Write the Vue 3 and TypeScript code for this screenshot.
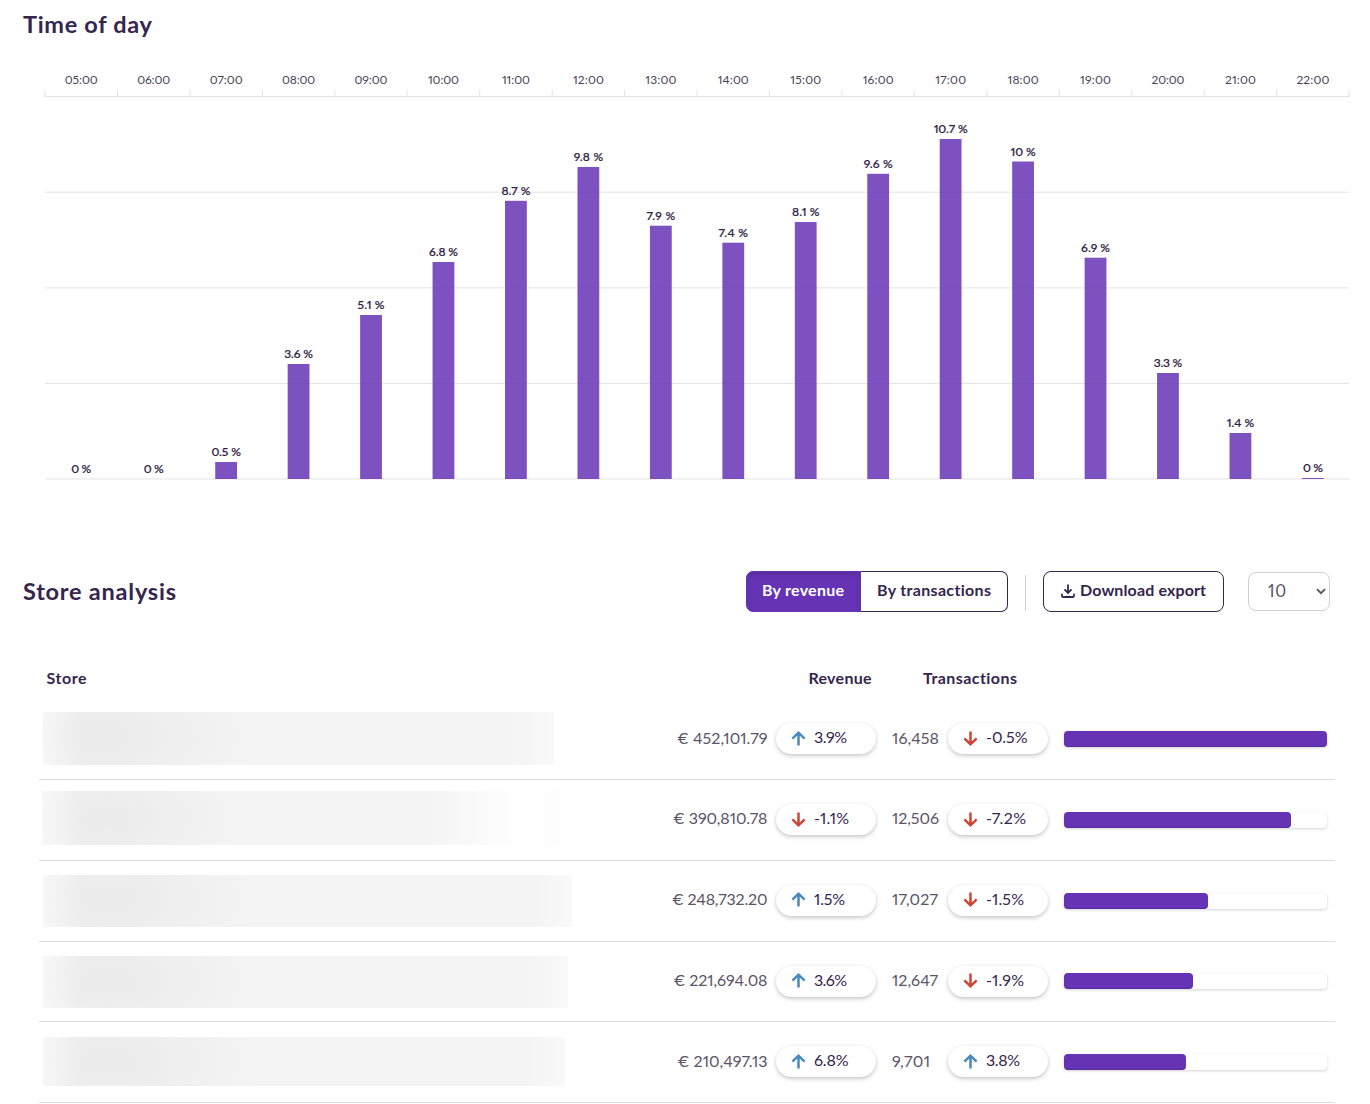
<script setup lang="ts">
interface Bar {
  hour: string
  label: string
  top: number
  w: number
}

const bars: Bar[] = [
  { hour: '05:00', label: '0 %', top: 479, w: 20 },
  { hour: '06:00', label: '0 %', top: 479, w: 20 },
  { hour: '07:00', label: '0.5 %', top: 462, w: 29.5 },
  { hour: '08:00', label: '3.6 %', top: 364, w: 28.5 },
  { hour: '09:00', label: '5.1 %', top: 315, w: 27 },
  { hour: '10:00', label: '6.8 %', top: 262, w: 29 },
  { hour: '11:00', label: '8.7 %', top: 200.8, w: 29 },
  { hour: '12:00', label: '9.8 %', top: 167, w: 29.5 },
  { hour: '13:00', label: '7.9 %', top: 225.7, w: 28.5 },
  { hour: '14:00', label: '7.4 %', top: 242.7, w: 29.5 },
  { hour: '15:00', label: '8.1 %', top: 222, w: 27.5 },
  { hour: '16:00', label: '9.6 %', top: 173.8, w: 29 },
  { hour: '17:00', label: '10.7 %', top: 139, w: 34 },
  { hour: '18:00', label: '10 %', top: 161.5, w: 25 },
  { hour: '19:00', label: '6.9 %', top: 257.7, w: 29 },
  { hour: '20:00', label: '3.3 %', top: 373, w: 28.5 },
  { hour: '21:00', label: '1.4 %', top: 433, w: 27.5 },
  { hour: '22:00', label: '0 %', top: 478, w: 20 },
]
const left = 45
const step = 72.45
const hourWidth = (h: string): number => (h === '11:00' ? 28 : h[0] === '1' || h[1] === '1' ? 31 : 33)
const center = (i: number): number => left + step * (i + 0.5)

interface Row {
  revenue: string
  revenueW: number
  revenueDelta: string
  revenueDeltaW: number
  count: string
  countW: number
  countDelta: string
  countDeltaW: number
  share: number
  blur: { x: number; y: number; w: number; h: number }
}
const rows: Row[] = [
  { revenue: '€ 452,101.79', revenueW: 90.5, revenueDelta: '3.9%', revenueDeltaW: 33, count: '16,458', countW: 47, countDelta: '-0.5%', countDeltaW: 41.5, share: 263, blur: { x: 4, y: 13, w: 511, h: 53 } },
  { revenue: '€ 390,810.78', revenueW: 94.5, revenueDelta: '-1.1%', revenueDeltaW: 35, count: '12,506', countW: 47, countDelta: '-7.2%', countDeltaW: 40, share: 227, blur: { x: 3, y: 11, w: 518, h: 54 } },
  { revenue: '€ 248,732.20', revenueW: 95.5, revenueDelta: '1.5%', revenueDeltaW: 31, count: '17,027', countW: 46, countDelta: '-1.5%', countDeltaW: 38, share: 144, blur: { x: 4, y: 14, w: 529, h: 52 } },
  { revenue: '€ 221,694.08', revenueW: 94, revenueDelta: '3.6%', revenueDeltaW: 33, count: '12,647', countW: 46, countDelta: '-1.9%', countDeltaW: 38, share: 129, blur: { x: 4, y: 14, w: 525, h: 52 } },
  { revenue: '€ 210,497.13', revenueW: 90, revenueDelta: '6.8%', revenueDeltaW: 34.5, count: '9,701', countW: 38, countDelta: '3.8%', countDeltaW: 34, share: 122, blur: { x: 4, y: 14.5, w: 522, h: 49 } },
]
const up = 'M7.5 14.4V1.8M1.4 7.7L7.5 1.7l6.1 6'
const down = 'M7.5.6v12.6M1.4 7.3l6.1 6 6.1-6'
const isDown = (v: string): boolean => v.startsWith('-')
</script>

<template>
  <main class="page">
    <h2 class="title"><svg width="140" height="36"><text x="0" y="25.4" textLength="129">Time of day</text></svg></h2>

    <svg class="chart" width="1370" height="440" viewBox="0 60 1370 440">
      <g class="grid">
        <path d="M45 96.5H1349" />
        <path d="M45 192.2H1349M45 287.9H1349M45 383.4H1349M45 479H1349" />
        <path v-for="n in 19" :key="n" :d="`M${left + step * (n - 1)} 90V97`" />
      </g>
      <g v-for="(b, i) in bars" :key="b.hour">
        <text class="hour" :x="center(i)" y="84" :textLength="hourWidth(b.hour)">{{ b.hour }}</text>
        <rect v-if="b.top < 479" class="bar" :x="center(i) - 10.9" :y="b.top" width="21.8" :height="479 - b.top" />
        <text class="value" :x="center(i)" :y="b.top - 6" :textLength="b.w">{{ b.label }}</text>
      </g>
    </svg>

    <header class="toolbar">
      <h2 class="title"><svg width="160" height="36"><text x="0" y="25.4" textLength="153">Store analysis</text></svg></h2>
      <div class="actions">
        <div class="toggle">
          <button class="on"><svg width="82" height="24"><text x="0" y="17" textLength="82">By revenue</text></svg></button>
          <button class="off"><svg width="114" height="24"><text x="0" y="17" textLength="114">By transactions</text></svg></button>
        </div>
        <span class="rule"></span>
        <button class="export">
          <svg class="dl" width="14" height="14" viewBox="0 0 14 14"><path d="M7 .4v8.2M3.4 5.3L7 8.9l3.6-3.6M1 9.8v2.3q0 .9.9.9h10.2q.9 0 .9-.9V9.8" /></svg>
          <svg width="126" height="24"><text x="0" y="17" textLength="126">Download export</text></svg>
        </button>
        <div class="select">
          <svg width="18" height="24"><text x="-1" y="18" textLength="18">10</text></svg>
          <svg class="chev" width="10" height="7" viewBox="0 0 10 7"><path d="M1 1.2l4 4 4-4" /></svg>
        </div>
      </div>
    </header>

    <section class="table">
      <div class="head">
        <svg class="h-store" width="42" height="24"><text x="-.5" y="17" textLength="40">Store</text></svg>
        <svg class="h-revenue" width="64" height="24"><text x="-.5" y="17" textLength="63">Revenue</text></svg>
        <svg class="h-trans" width="96" height="24"><text x="-1" y="17" textLength="94">Transactions</text></svg>
      </div>
      <div v-for="(r, i) in rows" :key="r.revenue" class="row">
        <div class="store">
          <div class="blur" :class="'b' + i" :style="{ marginLeft: r.blur.x + 'px', marginTop: r.blur.y + 'px', width: r.blur.w + 'px', height: r.blur.h + 'px' }"></div>
        </div>
        <svg class="num revenue" width="100" height="24"><text :x="99.5 - r.revenueW" y="17" :textLength="r.revenueW">{{ r.revenue }}</text></svg>
        <div class="pill">
          <svg width="15" height="15" :class="isDown(r.revenueDelta) ? 'neg' : 'pos'"><path :d="isDown(r.revenueDelta) ? down : up" /></svg>
          <svg class="delta" width="46" height="24"><text x="0" y="17" :textLength="r.revenueDeltaW">{{ r.revenueDelta }}</text></svg>
        </div>
        <svg class="num count" width="50" height="24"><text x="0" y="17" :textLength="r.countW">{{ r.count }}</text></svg>
        <div class="pill second">
          <svg width="15" height="15" :class="isDown(r.countDelta) ? 'neg' : 'pos'"><path :d="isDown(r.countDelta) ? down : up" /></svg>
          <svg class="delta" width="46" height="24"><text x="0" y="17" :textLength="r.countDeltaW">{{ r.countDelta }}</text></svg>
        </div>
        <div class="track"><div class="fill" :style="{ width: r.share + 'px' }"></div></div>
      </div>
    </section>
  </main>
</template>

<style>
body { background: #fff; overflow: hidden; }
</style>

<style scoped>
.page {
  width: 1370px;
  height: 1104px;
  overflow: hidden;
  display: flex;
  flex-direction: column;
  background: #fff;
  font-family: Lato, "Open Sans", sans-serif;
  font-variant-numeric: proportional-nums;
  font-variant-ligatures: none;
  color: #35254f;
}
svg { display: block; flex: none; overflow: visible; }
text { fill: currentColor; }
.title { margin: 8px 0 0 23px; height: 36px; font-size: 23.5px; font-weight: 700; line-height: 36px; }
.chart { margin-top: 16px; }
.grid path { stroke: #e3e3e5; stroke-width: 1; fill: none; }
.bar { fill: #6633b5; fill-opacity: .85; }
.hour { font-size: 12px; fill: #4a4358; text-anchor: middle; }
.value { font-size: 12px; font-weight: 500; fill: #2f2145; stroke: #2f2145; stroke-width: .2px; text-anchor: middle; }
.toolbar { display: flex; justify-content: space-between; margin-top: 71px; height: 41px; }
.toolbar .title { margin-top: 4px; }
.actions { display: flex; align-items: center; margin-right: 40px; font-size: 16px; font-weight: 700; }
button { font: inherit; color: inherit; background: #fff; border: 1px solid #35254f; box-sizing: border-box; height: 41px; padding: 0 0 2px 16px; display: flex; align-items: center; }
.toggle { display: flex; }
.on { width: 115px; background: #6633b5; border-color: #6633b5; color: #fff; border-radius: 7px 0 0 7px; box-shadow: inset 0 3px 5px rgba(0, 0, 0, .125); padding-left: 15px; }
.off { width: 147px; border-left: 0; border-radius: 0 7px 7px 0; }
.rule { width: 1px; height: 36px; background: #cfcfd4; margin: 3px 17px 0; }
.export { width: 181px; border-radius: 8px; padding-left: 17px; }
.dl { margin-right: 5px; margin-top: 1px; }
.dl path { fill: none; stroke: #35254f; stroke-width: 1.8; }
.select { box-sizing: border-box; width: 82px; height: 39px; margin-left: 24px; border: 1px solid #cfcfd4; border-radius: 8px; display: flex; align-items: center; justify-content: space-between; padding: 0 3px 2px 20px; color: #555064; font-weight: 400; font-size: 16.5px; }
.chev { margin-top: 1px; }
.chev path { fill: none; stroke: #555060; stroke-width: 1.8; }
.table { width: 1296px; margin-left: 39px; display: flex; flex-direction: column; }
.head { height: 87.4px; box-sizing: border-box; padding-top: 55px; display: flex; font-size: 16px; font-weight: 700; }
.h-store { margin-left: 8px; }
.h-revenue { margin-left: 719.5px; }
.h-trans { margin-left: 51px; }
.row { box-sizing: border-box; height: 80.75px; flex: none; border-bottom: 1px solid #dcdcde; display: flex; align-items: center; }
.store { width: 629px; align-self: stretch; }
.blur { background: radial-gradient(ellipse 150px 75px at 65px 24px, #ebebeb 0, rgba(236, 236, 236, .8) 35%, rgba(244, 244, 244, 0) 100%), linear-gradient(90deg, #f7f7f7, #f4f4f4 40px, #f4f4f4 calc(100% - 40px), #f9f9f9); mask: linear-gradient(90deg, rgba(0, 0, 0, .55), #000 35px); }
.b0 { background: radial-gradient(ellipse 160px 80px at 55px 24px, #ebebeb 0, rgba(236, 236, 236, .8) 35%, rgba(244, 244, 244, 0) 100%), linear-gradient(90deg, #f7f7f7, #f4f4f4 40px, #f4f4f4 calc(100% - 40px), #f9f9f9); }
.b1 { background: radial-gradient(ellipse 140px 75px at 65px 28px, #ebebeb 0, rgba(236, 236, 236, .75) 35%, rgba(244, 244, 244, 0) 100%), linear-gradient(90deg, #f6f6f6, #f4f4f4 40px, #f4f4f4 390px, #fbfbfb 440px, #fefefe 475px, #fdfdfd); }
.num { color: #5b5468; font-size: 16px; margin-top: -1.2px; }
.pill { box-sizing: border-box; width: 100px; height: 31px; margin-left: 7.5px; border-radius: 16px; background: #fff; box-shadow: 0 2px 4px rgba(0, 0, 0, .2), 0 0 3px rgba(0, 0, 0, .06); display: flex; align-items: center; padding: 0 0 1.2px 15px; font-size: 16px; color: #35254f; margin-top: -.6px; }
.delta { margin-left: 8px; }
.pos path, .neg path { fill: none; stroke-width: 2.5; }
.pos path { stroke: #4a89c0; }
.neg path { stroke: #cf4436; }
.count { margin-left: 16px; }
.second { margin-left: 6px; }
.track { width: 263px; height: 16px; margin: -.35px 0 0 16.5px; border-radius: 4px; background: #fff; box-shadow: 0 1px 3px rgba(0, 0, 0, .18); }
.fill { height: 16px; border-radius: 4px; background: #6633b5; box-shadow: inset 0 -1px 1px rgba(0, 0, 0, .15); }
</style>
